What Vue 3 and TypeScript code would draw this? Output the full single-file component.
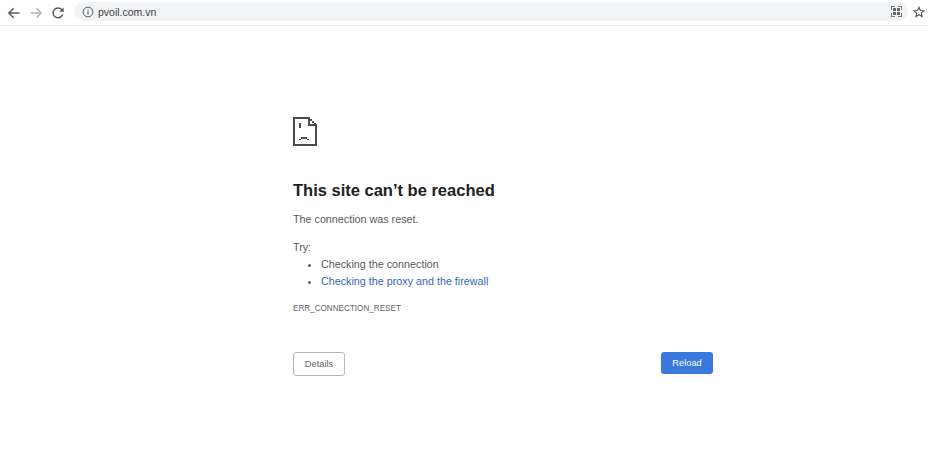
<script setup lang="ts">
const tips: { text: string; link: boolean }[] = [
  { text: 'Checking the connection', link: false },
  { text: 'Checking the proxy and the firewall', link: true },
]
</script>

<template>
  <div class="page">
    <header class="toolbar">
      <div class="nav">
        <svg class="nav-icon" viewBox="0 0 14 14" width="14" height="14"><path d="M12.5 7H2M6.6 2.2 1.8 7l4.8 4.8" fill="none" stroke="#5a5d61" stroke-width="1.5"/></svg>
        <svg class="nav-icon" viewBox="0 0 14 14" width="14" height="14"><path d="M1.5 7H12M7.4 2.2 12.2 7l-4.8 4.8" fill="none" stroke="#b4b6b9" stroke-width="1.5"/></svg>
        <svg class="nav-icon" viewBox="0 0 14 14" width="14" height="14"><path d="M11.6 8.6A4.9 4.9 0 1 1 10.6 3.6L12 5" fill="none" stroke="#5a5d61" stroke-width="1.5"/><path d="M12.6 1.4v4.4H8.2z" fill="#5a5d61"/></svg>
      </div>
      <div class="omnibox">
        <svg class="info" viewBox="0 0 12 12" width="12" height="12"><circle cx="6" cy="6" r="4.9" fill="none" stroke="#55585c" stroke-width="1"/><path d="M6 5.2v3.4M6 3.2v1.1" stroke="#55585c" stroke-width="1.1"/></svg>
        <span class="url">pvoil.com.vn</span>
        <svg class="qr" viewBox="0 0 11 11" width="11" height="11" shape-rendering="crispEdges"><path d="M0 0h4v1H1v3H0zM7 0h4v4h-1V1H7zM0 7h1v3h3v1H0zM10 7h1v4H7v-1h3z" fill="#777a7e"/><path d="M2 2h3v3H2zM6 2h3v3H6zM2 6h3v3H2zM6 6h3v3H6z" fill="#63666a"/></svg>
      </div>
      <svg class="star" viewBox="0 0 12 12" width="12" height="12"><path d="M6 1.2 7.4 4.5l3.6.3-2.7 2.3.8 3.5L6 8.7l-3.1 1.9.8-3.5L1 4.8l3.6-.3z" fill="none" stroke="#4f5256" stroke-width="1.1"/></svg>
    </header>

    <main class="content">
      <svg class="sad" viewBox="0 0 24 29" width="24" height="29" shape-rendering="crispEdges">
        <path fill="#4a4c4f" d="M0 0h16v2H2v25h20V9h2v20H0zM15 0h2v7h7v2h-9zM17 2h2v2h-2zM19 4h2v2h-2zM21 6h2v2h-2zM6 6h2v5H6zM8 20h6v2H8zM6 22h2v1H6zM14 22h2v1h-2z"/>
      </svg>
      <h1 class="title">This site can’t be reached</h1>
      <p class="reason">The connection was reset.</p>
      <p class="try">Try:</p>
      <ul class="tips">
        <li v-for="tip in tips" :key="tip.text" :class="{ link: tip.link }">{{ tip.text }}</li>
      </ul>
      <div class="code">ERR_CONNECTION_RESET</div>
      <div class="actions">
        <button class="btn details" type="button">Details</button>
        <button class="btn reload" type="button">Reload</button>
      </div>
    </main>
  </div>
</template>

<style>
html, body { background: #fff; }
</style>

<style scoped>
.page {
  width: 928px;
  height: 459px;
  overflow: hidden;
  background: #fff;
  font-family: "Liberation Sans", Arial, sans-serif;
  color: #5a5a5a;
}
.toolbar {
  height: 25px;
  border-bottom: 1px solid #e2e3e5;
  display: flex;
  align-items: center;
  padding-left: 7px;
  padding-right: 3px;
}
.nav { display: flex; gap: 8px; align-items: center; width: 67px; flex: none; }
.nav-icon { display: block; }
.omnibox {
  flex: 1;
  height: 19px;
  margin-top: -2px;
  border-radius: 10px;
  background: #f1f3f4;
  display: flex;
  align-items: center;
  padding: 0 6px 0 8px;
}
.info { flex: none; margin-right: 4px; }
.url { font-size: 10.5px; color: #3c3f43; flex: 1; }
.qr { flex: none; }
.star { flex: none; margin: -1px 0 0 5px; }
.content {
  width: 420px;
  margin-left: 293px;
  padding-top: 91px;
}
.sad { display: block; margin-bottom: 33px; }
.title {
  margin: 0;
  font-size: 16.5px;
  line-height: 22px;
  font-weight: 700;
  color: #202124;
}
.reason { margin: 10px 0 0; font-size: 10.75px; line-height: 16px; }
.try { margin: 12px 0 0; font-size: 10.75px; line-height: 16px; }
.tips { margin: 1px 0 0; padding: 0 0 0 28px; font-size: 10.75px; line-height: 17px; }
.tips .link { color: #3367b5; }
.tips li::marker { color: #5a5a5a; }
.code { margin-top: 13px; font-size: 8.15px; line-height: 12px; color: #5f6368; }
.actions { margin-top: 37px; display: flex; justify-content: space-between; }
.btn {
  font-family: inherit;
  font-size: 9.3px;
  border-radius: 3px;
  padding: 0;
  cursor: pointer;
}
.details {
  width: 52px;
  height: 24px;
  background: #fff;
  border: 1px solid #b8b8b8;
  color: #5f6368;
}
.reload {
  width: 52px;
  height: 22px;
  background: #3b78dc;
  border: none;
  color: #fff;
}
</style>
